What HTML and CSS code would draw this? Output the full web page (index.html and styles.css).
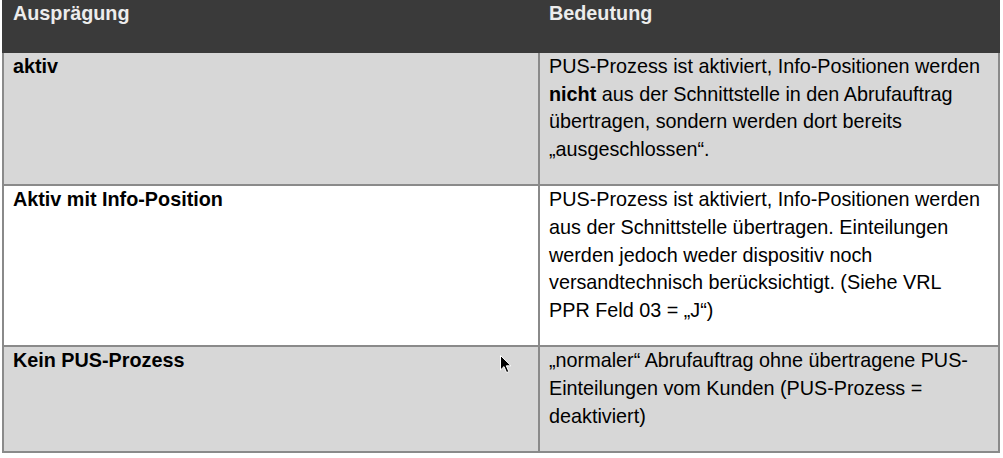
FILE: index.html
```html
<!DOCTYPE html>
<html lang="de">
<head>
<meta charset="utf-8">
<title>PUS-Prozess</title>
<link rel="stylesheet" href="styles.css">
</head>
<body>
<div class="table">
  <div class="head">
    <div class="hcell">Ausprägung</div>
    <div class="hcell">Bedeutung</div>
  </div>
  <div class="row grey">
    <div class="cell key"><p><b>aktiv</b></p></div>
    <div class="cell"><p>PUS-Prozess ist aktiviert, Info-Positionen werden <b>nicht</b> aus der Schnittstelle in den Abrufauftrag übertragen, sondern werden dort bereits „ausgeschlossen“.</p></div>
  </div>
  <div class="row">
    <div class="cell key"><p><b>Aktiv mit Info-Position</b></p></div>
    <div class="cell"><p>PUS-Prozess ist aktiviert, Info-Positionen werden aus der Schnittstelle übertragen. Einteilungen werden jedoch weder dispositiv noch versandtechnisch berücksichtigt. (Siehe VRL PPR Feld 03 = „J“)</p></div>
  </div>
  <div class="row grey">
    <div class="cell key"><p><b>Kein PUS-Prozess</b></p>
      <svg class="cursor" width="12" height="19" viewBox="0 0 12 19"><path d="M0.5 0.5 L0.5 15 L4 11.6 L6.6 17.6 L8.8 16.6 L6.3 10.8 L11 10.8 Z" fill="#000" stroke="#fff" stroke-width="1"/></svg>
    </div>
    <div class="cell"><p>„normaler“ Abrufauftrag ohne übertragene PUS-Einteilungen vom Kunden (PUS-Prozess = deaktiviert)</p></div>
  </div>
</div>
</body>
</html>
```

FILE: styles.css
```css
html, body {
  margin: 0;
  padding: 0;
  background: #ffffff;
}
body {
  font-family: "Liberation Sans", Arial, sans-serif;
  font-size: 19.8px;
  color: #000;
}
.table {
  margin-left: 2px;
  width: 998px;
}
.head {
  display: grid;
  grid-template-columns: 536px 1fr;
  height: 53px;
  background: #3a3a3a;
}
.hcell {
  color: #ececec;
  font-weight: bold;
  line-height: 27.6px;
  padding-left: 11px;
}
.row {
  display: grid;
  grid-template-columns: 536px 1fr;
  border-left: 2px solid #8a8a8a;
  border-right: 2px solid #8a8a8a;
  border-bottom: 2px solid #8a8a8a;
  background: #ffffff;
}
.row.grey {
  background: #d7d7d7;
}
.cell {
  padding: 0 14px 21px 9px;
  line-height: 27.6px;
}
.cell.key {
  position: relative;
  border-right: 2px solid #8a8a8a;
}
.cell p {
  margin: 0;
}
.cursor {
  position: absolute;
  left: 496px;
  top: 8px;
}
```
